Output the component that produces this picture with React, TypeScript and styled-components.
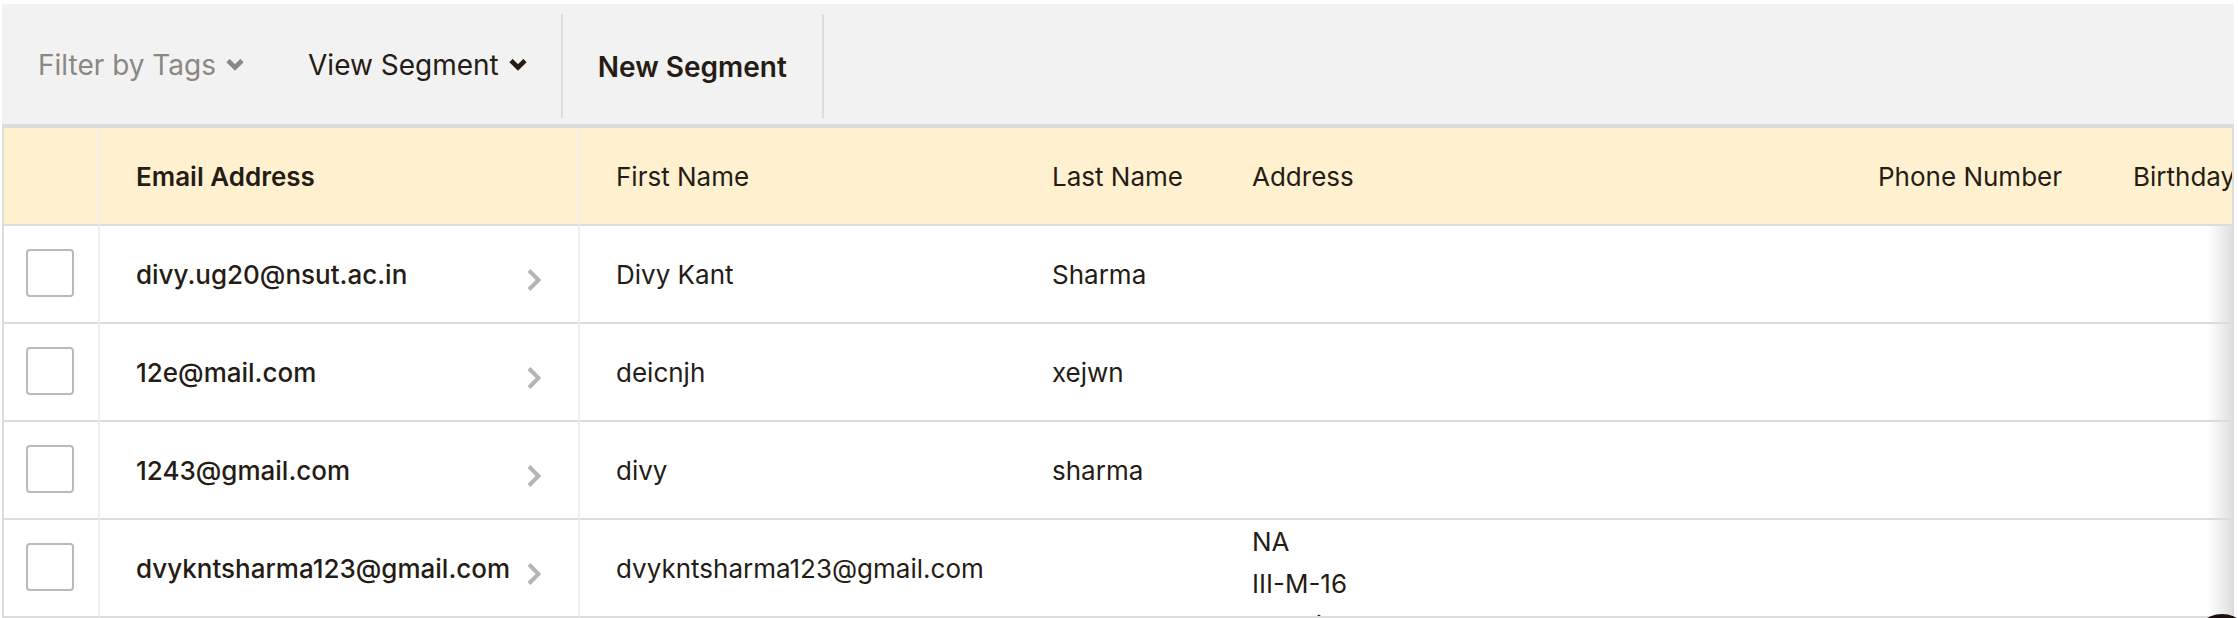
import React from 'react';
import styled, { createGlobalStyle } from 'styled-components';

const Global = createGlobalStyle`
  *, *::before, *::after { box-sizing: border-box; }
  body { margin: 0; background: #fff; color: #241c15; font-family: Inter, "Liberation Sans", sans-serif; font-size: 26px; line-height: 42px; overflow: hidden; }
`;

const Page = styled.main`
  padding: 4px 4px 0 2px;
`;

const Toolbar = styled.div`
  display: flex;
  align-items: stretch;
  gap: 34px;
  padding: 10px 36px 6px;
  background: #f2f2f2;
`;

const MenuButton = styled.button<{ $muted?: boolean }>`
  display: flex;
  align-items: center;
  gap: 10px;
  padding: 0 0 2px;
  border: 0;
  background: none;
  font: inherit;
  font-size: 28px;
  color: ${(p) => (p.$muted ? '#8b8783' : '#241c15')};
  &:first-child { margin-right: 30px; }
`;

const SegmentButton = styled.button`
  height: 104px;
  padding: 2px 35px 0;
  border: solid #dcdcdb;
  border-width: 0 2px;
  background: none;
  color: #241c15;
  font: inherit;
  font-size: 28px;
  font-weight: 600;
`;

const TableFrame = styled.div`
  position: relative;
  border: 2px solid #dcdcdb;
  border-top-width: 4px;
  border-bottom: 0;
  overflow: hidden;
`;

const Table = styled.table`
  width: 100%;
  table-layout: fixed;
  border-collapse: separate;
  border-spacing: 0;
`;

const Col = styled.col<{ $w?: number }>`
  width: ${(p) => (p.$w ? `${p.$w}px` : 'auto')};
`;

const HeadCell = styled.th<{ $divided?: boolean; $strong?: boolean }>`
  height: 98px;
  padding: 2px 0 0 36px;
  overflow: hidden;
  white-space: nowrap;
  text-align: left;
  background: #fff1d0;
  border-bottom: 2px solid #dcdcdb;
  border-right: ${(p) => (p.$divided ? '2px solid #efefef' : '0')};
  font-weight: ${(p) => (p.$strong ? 600 : 400)};
`;

const Cell = styled.td<{ $divided?: boolean }>`
  height: 98px;
  padding: 2px 0 0 36px;
  white-space: nowrap;
  border-bottom: 2px solid #dcdcdb;
  border-right: ${(p) => (p.$divided ? '2px solid #efefef' : '0')};
`;

const CheckCell = styled(Cell)`
  padding: 0 0 2px 22px;
`;

const AddressCell = styled(Cell)`
  padding: 0 0 0 36px;
`;

const Checkbox = styled.input`
  appearance: none;
  display: block;
  width: 48px;
  height: 48px;
  margin: 0;
  border: 2px solid #bdb9b4;
  border-radius: 4px;
  background: #fff;
  &:checked { background: #007c89; }
`;

const Contact = styled.a`
  display: flex;
  align-items: center;
  justify-content: space-between;
  padding-right: 37px;
  color: inherit;
  font-weight: 500;
  text-decoration: none;
  svg { margin-top: 10px; }
`;

const AddressLines = styled.div`
  height: 96px;
  padding-top: 1px;
  overflow: hidden;
  p { margin: 0; }
`;

const EdgeShade = styled.div`
  position: absolute;
  top: 98px;
  right: 0;
  bottom: 0;
  width: 24px;
  background: linear-gradient(to right, rgba(220, 220, 220, 0), rgba(220, 220, 220, 0.9));
  pointer-events: none;
`;

const HelpButton = styled.button`
  position: fixed;
  right: -14px;
  bottom: -56px;
  width: 60px;
  height: 60px;
  padding: 0;
  border: 0;
  border-radius: 50%;
  background: #1c0f0b;
`;

const Caret = () => (
  <svg width="18" height="12" viewBox="0 0 18 12" fill="none" aria-hidden="true">
    <path d="M2 1.5l7 7 7-7" stroke="currentColor" strokeWidth="4.6" />
  </svg>
);

const Chevron = () => (
  <svg width="14" height="24" viewBox="0 0 14 24" fill="none" aria-hidden="true">
    <path d="M2 2.5l9.5 9.5-9.5 9.5" stroke="#b5b5b5" strokeWidth="4" />
  </svg>
);

type Row = { email: string; first: string; last?: string; address?: string[] };

const rows: Row[] = [
  { email: 'divy.ug20@nsut.ac.in', first: 'Divy Kant', last: 'Sharma' },
  { email: '12e@mail.com', first: 'deicnjh', last: 'xejwn' },
  { email: '1243@gmail.com', first: 'divy', last: 'sharma' },
  {
    email: 'dvykntsharma123@gmail.com',
    first: 'dvykntsharma123@gmail.com',
    address: ['NA', 'III-M-16', 'Ghaziabad Nehru Nagar Uttar Pradesh'],
  },
];

export default function App() {
  return (
    <Page>
      <Global />
      <Toolbar>
        <MenuButton $muted>Filter by Tags<Caret /></MenuButton>
        <MenuButton>View Segment<Caret /></MenuButton>
        <SegmentButton>New Segment</SegmentButton>
      </Toolbar>
      <TableFrame>
        <Table>
          <colgroup>
            <Col $w={96} />
            <Col $w={480} />
            <Col $w={436} />
            <Col $w={200} />
            <Col />
            <Col $w={255} />
            <Col $w={135} />
          </colgroup>
          <thead>
            <tr>
              <HeadCell $divided aria-label="Select" />
              <HeadCell $divided $strong>Email Address</HeadCell>
              <HeadCell>First Name</HeadCell>
              <HeadCell>Last Name</HeadCell>
              <HeadCell>Address</HeadCell>
              <HeadCell>Phone Number</HeadCell>
              <HeadCell>Birthday</HeadCell>
            </tr>
          </thead>
          <tbody>
            {rows.map((row) => (
              <tr key={row.email}>
                <CheckCell $divided>
                  <Checkbox type="checkbox" aria-label={`Select ${row.email}`} />
                </CheckCell>
                <Cell $divided>
                  <Contact href="#contact">{row.email}<Chevron /></Contact>
                </Cell>
                <Cell>{row.first}</Cell>
                <Cell>{row.last}</Cell>
                <AddressCell>
                  {row.address && (
                    <AddressLines>
                      {row.address.map((line) => <p key={line}>{line}</p>)}
                    </AddressLines>
                  )}
                </AddressCell>
                <Cell />
                <Cell />
              </tr>
            ))}
          </tbody>
        </Table>
        <EdgeShade />
      </TableFrame>
      <HelpButton aria-label="Help" />
    </Page>
  );
}
